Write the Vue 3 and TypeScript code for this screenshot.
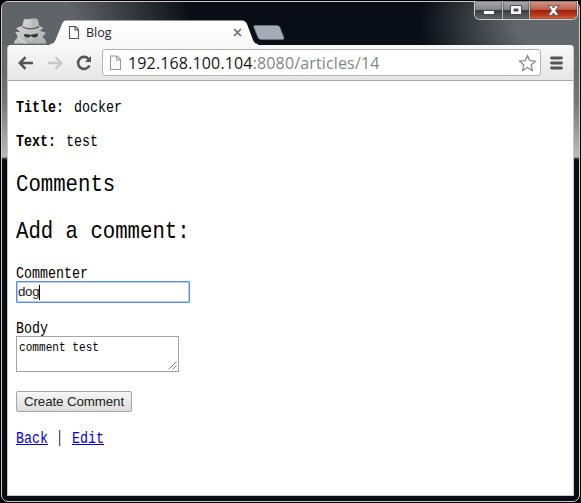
<script setup lang="ts">
import { ref } from 'vue'

const host = ref('192.168.100.104')
const path = ref(':8080/articles/14')
const article = { title: 'docker', text: 'test' }
const commenter = ref('dog')
const body = ref('comment test')
</script>

<template>
  <div class="desktop">
    <div class="window">
      <header class="titlebar">
        <svg class="spy" width="36" height="28" viewBox="0 0 36 28">
          <defs>
            <linearGradient id="coat" x1="0" x2="1" y2="1">
              <stop offset="0" stop-color="#dcdcdc" /><stop offset="1" stop-color="#aaabac" />
            </linearGradient>
          </defs>
          <path d="M1 28 2.500 24.500 5.500 21 2.500 15.500 7.500 15.500 4 13 4.500 11.500 10 9.500 11.500 3.500 13 2.500 16 3 18.500 2.500 24 2.500 26 4 27 9.500 31 11 31.500 12.500 28.500 14.500 34.500 16.500 31 21 34 24 35 28Z" fill="url(#coat)" stroke="#4b4e51" stroke-width=".6" />
          <path d="M19 2.500 24 2.500 26 4 27 9.500Q23 11.500 20 11.500Z" fill="#b7b8b9" />
          <path d="M10 10Q18 14.500 27 10L27 11.800Q18 15.500 10.500 11.500Z" fill="#56595c" />
          <path d="M12 18 17 18.500 18.700 19 20 18.500 26 17.500Q26 21.500 22.800 21.500 20 21.500 18.800 19.700 17.500 22 14.500 21.500 12 21 12 18Z" fill="#33373a" />
          <path d="M12.500 22Q16 26 20 27.500Q24 25 26 21.500" fill="none" stroke="#96989a" stroke-width=".8" />
          <path d="M5.500 20Q7 24 14 27.500" fill="none" stroke="#f0f0f0" stroke-width=".7" />
        </svg>
        <div class="tab">
          <svg class="tab-shape" width="214" height="25" viewBox="0 0 214 25">
            <defs>
              <linearGradient id="tabfill" x2="0" y2="1"><stop stop-color="#fff" /><stop offset="1" stop-color="#f7f7f7" /></linearGradient>
            </defs>
            <path d="M0 25V24Q4 24 5.500 20L12 4Q13 .5 16 .5H192Q195.500 .5 197 4L203 20Q204.500 24 208 24V25Z" fill="url(#tabfill)" />
          </svg>
          <svg class="tab-page" width="12" height="15" viewBox="0 0 12 15"><path d="M1.500 1.500H7.500L10.500 4.500V13.500H1.500ZM7 1.500V5H10.500" fill="#fff" stroke="#555" stroke-width="1.100" /></svg>
          <span class="tab-title">Blog</span>
          <svg class="tab-close" width="9" height="9" viewBox="0 0 9 9"><path d="M1 1 8 8M8 1 1 8" stroke="#707070" stroke-width="1.700" /></svg>
        </div>
        <svg class="new-tab" width="32" height="15" viewBox="0 0 32 15"><path d="M2 .5H24Q26 .5 27 2.500L31 13Q31.300 14.500 29.500 14.500H8Q6 14.500 5 12.500L.8 2Q.3.500 2 .5Z" fill="#a5abb4" stroke="#747b83" stroke-width=".6" /></svg>
        <div class="controls">
          <span class="control minimize"><svg width="12" height="5" viewBox="0 0 12 5"><rect x=".5" y=".5" width="11" height="4" fill="#fff" stroke="#484b52" /></svg></span>
          <span class="control maximize"><svg width="12" height="10" viewBox="0 0 12 10"><path fill-rule="evenodd" d="M.5.500H11.500V9.500H.5ZM4 4V6H8V4Z" fill="#f4f4f4" stroke="#484d5c" /></svg></span>
          <span class="control close"><svg width="13" height="11" viewBox="0 0 13 11"><path d="M1 .6H4.500L6.500 3 8.500.600H12L8.500 5.500 12 10.400H8.500L6.500 8 4.500 10.400H1L4.500 5.500Z" fill="#f5f5f5" stroke="#4b4e61" stroke-width=".9" /></svg></span>
        </div>
      </header>

      <main class="browser">
        <nav class="toolbar">
          <svg class="back" width="16" height="14" viewBox="0 0 16 14"><path d="M15 7H2.500M7.500 1.200 1.800 7 7.500 12.800" fill="none" stroke="#555" stroke-width="2.500" /></svg>
          <svg class="forward" width="16" height="14" viewBox="0 0 16 14"><path d="M1 7H13.500M8.500 1.200 14.200 7 8.500 12.800" fill="none" stroke="#c6c6c6" stroke-width="2.300" /></svg>
          <svg class="reload" width="16" height="16" viewBox="0 0 16 16"><path d="M12.800 4.200A6 6 0 1 0 13.500 10.500" fill="none" stroke="#555" stroke-width="2.600" /><path d="M15 1V7H9Z" fill="#555" /></svg>
          <div class="address">
            <svg class="site" width="13" height="16" viewBox="0 0 13 16"><path d="M1.500 1H8L11.500 4.500V14.500H1.500ZM7.500 1V5H11.500" fill="#fafafa" stroke="#999" stroke-width="1.100" /></svg>
            <span class="url"><span class="host">{{ host }}</span>{{ path }}</span>
            <svg class="star" width="19" height="18" viewBox="0 0 19 18"><path d="M9.500 1.200 11.700 6.700 17.600 7.100 13.100 10.900 14.500 16.700 9.500 13.500 4.500 16.700 5.900 10.900 1.400 7.100 7.300 6.700Z" fill="#fff" stroke="#8c8c8c" stroke-width="1.300" stroke-linejoin="round" /></svg>
          </div>
          <svg class="menu" width="13" height="14" viewBox="0 0 13 14"><path d="M1.500 2H11.500M1.500 7H11.500M1.500 12H11.500" stroke="#555" stroke-width="2.800" stroke-linecap="round" /></svg>
        </nav>

        <section class="page">
          <p class="line"><span class="narrow"><strong>Title:</strong> {{ article.title }}</span></p>
          <p class="line"><span class="narrow"><strong>Text:</strong> {{ article.text }}</span></p>
          <h2><span class="narrow">Comments</span></h2>
          <h2><span class="narrow">Add a comment:</span></h2>
          <div class="field">
            <label><span class="narrow">Commenter</span></label>
            <div class="input">{{ commenter }}<i class="caret"></i></div>
          </div>
          <div class="field">
            <label><span class="narrow">Body</span></label>
            <div class="textarea">
              <span class="narrow">{{ body }}</span>
              <svg class="grip" width="9" height="9" viewBox="0 0 9 9"><path d="M.5 8.500 8.500.500M4.500 8.500 8.500 4.500" stroke="#777" stroke-width=".9" /></svg>
            </div>
          </div>
          <button class="submit" type="button">Create Comment</button>
          <p class="links"><span class="narrow"><a>Back</a> <i class="bar"></i> <a>Edit</a></span></p>
        </section>
      </main>
    </div>
  </div>
</template>

<style>
body { margin: 0; overflow: hidden; }
</style>

<style scoped>
* { box-sizing: border-box; }
svg { display: block; flex: none; }
.desktop { width: 581px; height: 503px; padding: 1px; background: #000; }
.window {
  width: 579px; height: 501px; padding: 0 5px 5px; border: 1px solid #c9cbce; border-radius: 7px;
  background: linear-gradient(#5d6165 0, #686b6e 70px, #777 100px, #bbb 155px, #555 156px, #0a0e14 158px);
}
.titlebar {
  display: flex; height: 43px; margin: 0 -5px; padding-left: 10px; border-radius: 6px 6px 0 0;
  background:
    radial-gradient(ellipse 160px 85px at 100% 50%, #62676b 0 40%, transparent 100%),
    radial-gradient(ellipse 190px 100px at 0 45%, #606468 0 38%, transparent 100%),
    #090e14;
}
.spy { margin-top: 14px; }
.tab { position: relative; display: flex; width: 214px; height: 25px; margin: 18px 0 0 2px; padding: 5px 0 0 18px; }
.tab-shape { position: absolute; top: 0; left: 0; }
.tab-page, .tab-title, .tab-close { position: relative; }
.tab-title { margin-left: 6px; font: 12.500px/16px "Open Sans", sans-serif; color: #242433; }
.tab-close { margin: 3px 0 0 auto; margin-right: 22px; }
.new-tab { margin: 23px 0 0 -11px; }
.controls { display: flex; height: 19px; margin: -1px 1px 0 auto; border: 1px solid #d0d1d3; border-top: 0; border-radius: 0 0 6px 6px; overflow: hidden; background: #333; }
.control { display: flex; align-items: center; justify-content: center; width: 28px; border-right: 1px solid #bbb; background: linear-gradient(#aaa 0, #85878a 47%, #35393d 50%, #64676a 100%); box-shadow: inset 0 0 0 1px #44474a66; }
.minimize svg { margin-top: 5px; }
.maximize { width: 27px; }
.close { width: 47px; border: 0; background: linear-gradient(#d79a8e 0, #bd604e 47%, #9d210c 50%, #bd3a1c 80%, #d46a41 100%); }
.browser { height: 451px; border-right: 1px solid #c5c7c9; border-bottom: 1px solid #c5c7c9; border-left: 1px solid #c5c7c9; border-radius: 4px 4px 0 0; background: #fff; overflow: hidden; }
.toolbar { display: flex; align-items: center; height: 36px; padding: 0 10px; border-bottom: 1px solid #a9a9a9; background: linear-gradient(#f8f8f8, #e6e6e6); }
.forward { margin-left: 13px; }
.reload { margin-left: 13px; }
.address { display: flex; align-items: center; width: 439px; height: 27px; margin-left: 10px; padding: 0 3px 0 6px; border: 1px solid #b3b3b3; border-radius: 3px; background: #fff; }
.url { margin-left: 6px; font: 16px/24px "Open Sans", sans-serif; letter-spacing: .15px; color: #858585; white-space: nowrap; }
.host { color: #161616; }
.star { margin-left: auto; }
.menu { margin-left: 9px; }
.page { padding: 19px 8px 0; font: 16px/16px "Liberation Mono", monospace; color: #000; }
.narrow { display: inline-block; transform: scaleX(.8333); transform-origin: 0 50%; white-space: pre; }
.line { height: 16px; margin: 0 0 18px; }
.line strong { margin-right: 2.400px; }
h2 { height: 27px; margin: 0 0 20px; font-size: 24px; line-height: 27px; font-weight: 400; }
h2 .narrow { transform: scaleX(.861); }
.line + h2 { margin-top: 21px; }
.field { margin-bottom: 17px; }
.field + .submit { margin-top: 19px; }
label { display: block; height: 16px; line-height: 18px; }
.input { display: flex; align-items: center; width: 174px; height: 22px; padding-left: 1px; border: 1px solid #5b90e0; box-shadow: inset 0 0 0 1px #b6cdf3; border-radius: 1px; font: 13.333px/18px "Liberation Sans", sans-serif; letter-spacing: -.3px; color: #222; }
.caret { width: 1px; height: 15px; background: #000; }
.textarea { display: flex; justify-content: space-between; width: 163px; height: 36px; padding: 3px 1px 1px 2px; border: 1px solid #a5a5a5; font-size: 13.333px; line-height: 15px; }
.grip { align-self: flex-end; }
.submit { display: block; width: 116px; height: 21px; padding: 0; border: 1px solid #a6a6a6; border-radius: 2px; background: linear-gradient(#f6f6f6, #ddd); font: 13.333px/17px "Liberation Sans", sans-serif; letter-spacing: -.1px; color: #222; }
.links { height: 16px; margin: 18px 0 0; }
a { color: #00e; text-decoration: underline; }
.bar { display: inline-block; width: 1.200px; height: 16px; margin: 0 4.200px; background: #000; vertical-align: -3px; }
</style>
